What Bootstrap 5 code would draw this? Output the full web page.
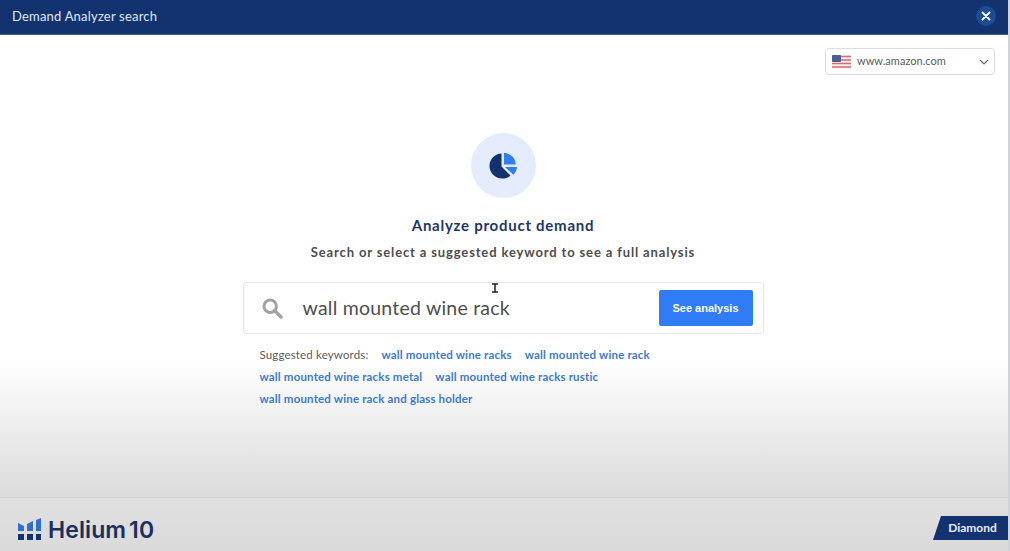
<!DOCTYPE html>
<html lang="en">
<head>
    <meta charset="UTF-8">
    <meta name="viewport" content="width=device-width, initial-scale=1.0">
    <title>Demand Analyzer search</title>
    <link href="https://cdn.jsdelivr.net/npm/bootstrap@5.3.0/dist/css/bootstrap.min.css" rel="stylesheet">
    <style>
        html, body { height: 100%; overflow: hidden; }
        body { font-family: "Lato", "Open Sans", sans-serif; color: #4a4a4a; background: #fff; }

        .app-shell { height: 551px; background: linear-gradient(#fff 0, #fff 360px, #dbdbdb 497px); border-right: 2px solid #cfd3da; }

        /* Header */
        .top-bar { height: 35px; background: #12336f; border-bottom: 1px solid #3d5a91; color: #dfe6f2; padding: 0 12px 0 12px; }
        .top-title { font-size: 13px; letter-spacing: .2px; margin-top: -1px; }
        .close-round { width: 20px; height: 20px; border-radius: 50%; background: #1f4a94; border: 0; padding: 0; line-height: 0; margin-top: -3px; }

        /* Market select */
        .market-row { padding: 13px 13px 0 0; }
        .market-select { width: 170px; height: 27px; border: 1px solid #d9dce1; border-radius: 4px; padding: 0 5px 0 6px; font-size: 11px; color: #5b5b5b; letter-spacing: .02px; }
        .market-name { margin-left: 6px; }

        /* Hero */
        .hero-area { padding-right: 2px; }
        .hero-round { width: 65px; height: 65px; border-radius: 50%; background: #e4ecfb; margin-top: 58px; padding-left: 1px; }
        .hero-title { font-size: 15px; font-weight: 700; color: #1d3768; letter-spacing: .74px; margin: 18px 0 0; line-height: 18px; }
        .hero-sub { font-size: 13px; font-weight: 700; color: #4e4e4e; letter-spacing: .86px; margin: 9px 0 0; line-height: 18px; }

        /* Search */
        .search-wrap { width: 521px; margin: 21px auto 0; }
        .search-box { height: 52px; border: 1px solid #e4e5e8; border-radius: 4px; background: #fff; padding: 0 10px 0 18px; }
        .search-text { font-size: 19.5px; color: #4f4f4f; margin-left: 20px; letter-spacing: .22px; }
        .see-btn { width: 94px; height: 36px; padding: 0; background: #2f7cf6; border: 0; border-radius: 2px; font-family: "Liberation Sans", sans-serif; font-size: 11px; font-weight: 700; }
        .hint-list { padding: 10px 0 0 17px; font-size: 11.5px; line-height: 22px; }
        .hint-label { color: #5a5a5a; margin-right: 10px; letter-spacing: .15px; }
        .hint-link { color: #3c7ad6; font-weight: 700; text-decoration: none; margin-right: 10px; letter-spacing: .17px; }

        /* Footer */
        .foot-bar { height: 54px; border-top: 1px solid #d0d0d0; background: linear-gradient(#e0e0e0, #dadada); padding: 0 0 11px 18px; }
        .brand-name { font-family: "Inter", "Liberation Sans", sans-serif; font-size: 23px; font-weight: 600; color: #1a2f5e; margin-left: 6px; letter-spacing: .1px; word-spacing: -3px; line-height: 1; position: relative; top: 2px; }
        .plan-tag { width: 75px; height: 24px; background: #12336f; color: #e6ebf4; font-size: 12px; font-weight: 700; clip-path: polygon(8px 0, 100% 0, 100% 100%, 0 100%); padding-left: 4px; }

        .text-cursor { position: absolute; left: 491px; top: 283px; }
    </style>
</head>
<body>
    <div class="app-shell d-flex flex-column position-relative">
        <header class="top-bar d-flex align-items-center justify-content-between">
            <span class="top-title">Demand Analyzer search</span>
            <button class="close-round d-flex align-items-center justify-content-center" type="button" aria-label="Close">
                <svg width="10" height="10" viewBox="0 0 10 10"><path d="M1.5 1.5l7 7M8.500 1.500l-7 7" stroke="#fff" stroke-width="1.8" stroke-linecap="round"/></svg>
            </button>
        </header>

        <main class="flex-grow-1">
            <div class="market-row d-flex justify-content-end">
                <div class="market-select d-flex align-items-center bg-white">
                    <svg width="19" height="14" viewBox="0 0 19 14">
                        <rect width="19" height="14" rx="1.500" fill="#f4f1f2"/>
                        <path d="M0 1.500h19M0 5h19M0 8.500h19M0 12h19" stroke="#dd6a6f" stroke-width="1.700"/>
                        <rect width="9" height="7" rx="1" fill="#4a5f91"/>
                    </svg>
                    <span class="market-name flex-grow-1">www.amazon.com</span>
                    <svg width="10" height="6" viewBox="0 0 10 6"><path d="M1 1l4 4 4-4" fill="none" stroke="#666" stroke-width="1.200"/></svg>
                </div>
            </div>

            <div class="hero-area">
                <div class="text-center">
                    <div class="hero-round d-inline-flex align-items-center justify-content-center">
                        <svg width="29" height="26" viewBox="0 0 29 26">
                            <path d="M12.500 0.500V13.500L21.500 22.500C19.300 24.600 16.300 25.500 13.200 25.500C6 25.500 0.500 19.800 0.500 13C0.500 6.200 6 0.700 12.500 0.500Z" fill="#12336f"/>
                            <path d="M15 0C21.500 0 26.600 5 26.700 11.500H15Z" fill="#2f7cf6"/>
                            <path d="M16 14H28C27.700 17 26.500 19.600 24.400 21.800Z" fill="#2f7cf6"/>
                        </svg>
                    </div>
                    <h1 class="hero-title">Analyze product demand</h1>
                    <p class="hero-sub">Search or select a suggested keyword to see a full analysis</p>
                </div>

                <div class="search-wrap">
                    <div class="search-box d-flex align-items-center">
                        <svg width="21" height="21" viewBox="0 0 21 21"><circle cx="8.200" cy="8.200" r="6.200" fill="none" stroke="#a3a3a3" stroke-width="3"/><path d="M12.800 12.800l6.200 6.200" stroke="#a3a3a3" stroke-width="3.400" stroke-linecap="round"/></svg>
                        <span class="search-text flex-grow-1">wall mounted wine rack</span>
                        <button class="btn btn-primary see-btn" type="button">See analysis</button>
                    </div>
                    <div class="hint-list">
                        <span class="hint-label">Suggested keywords:</span>
                        <a class="hint-link" href="#">wall mounted wine racks</a>
                        <a class="hint-link" href="#">wall mounted wine rack</a><br>
                        <a class="hint-link" href="#">wall mounted wine racks metal</a>
                        <a class="hint-link" href="#">wall mounted wine racks rustic</a><br>
                        <a class="hint-link" href="#">wall mounted wine rack and glass holder</a>
                    </div>
                </div>
            </div>
        </main>

        <footer class="foot-bar d-flex align-items-end justify-content-between">
            <div class="d-flex align-items-center">
                <svg width="24" height="22" viewBox="0 0 24 22">
                    <path d="M0 5l6 3v5H0zM9 6l6-3v10H9zM18 2l5-2v13h-5z" fill="#2f6fd0"/>
                    <path d="M0 16h6v6H0zM9 16h6v6H9zM18 16h5v6h-5z" fill="#12336f"/>
                </svg>
                <span class="brand-name">Helium 10</span>
            </div>
            <div class="plan-tag d-flex align-items-center justify-content-center">Diamond</div>
        </footer>

        <svg class="text-cursor" width="8" height="10" viewBox="0 0 8 10"><path d="M1 1h6M1 9h6M4 1v8" stroke="#222" stroke-width="1.500"/></svg>
    </div>

    <script src="https://cdn.jsdelivr.net/npm/bootstrap@5.3.0/dist/js/bootstrap.bundle.min.js"></script>
</body>
</html>
